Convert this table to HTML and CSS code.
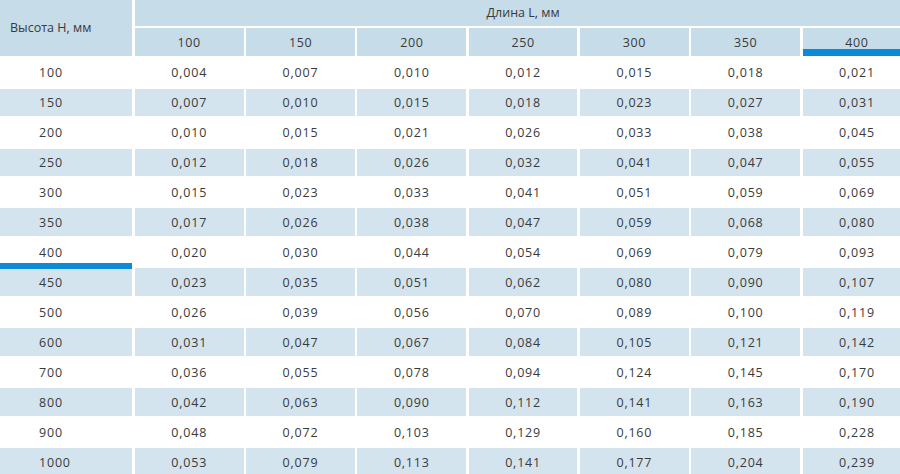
FILE: index.html
```html
<!DOCTYPE html>
<html lang="ru">
<head>
<meta charset="utf-8">
<title>Таблица</title>
<link rel="stylesheet" href="styles.css">
</head>
<body>
<div class="grid">
  <div class="hcell corner">Высота Н, мм</div>
  <div class="hcell span">Длина L, мм</div>
  <div class="hcell">100</div>
  <div class="hcell">150</div>
  <div class="hcell">200</div>
  <div class="hcell">250</div>
  <div class="hcell">300</div>
  <div class="hcell">350</div>
  <div class="hcell mark">400</div>

  <div class="row"><div class="c first">100</div><div class="c">0,004</div><div class="c">0,007</div><div class="c">0,010</div><div class="c">0,012</div><div class="c">0,015</div><div class="c">0,018</div><div class="c">0,021</div></div>
  <div class="row alt"><div class="c first">150</div><div class="c">0,007</div><div class="c">0,010</div><div class="c">0,015</div><div class="c">0,018</div><div class="c">0,023</div><div class="c">0,027</div><div class="c">0,031</div></div>
  <div class="row"><div class="c first">200</div><div class="c">0,010</div><div class="c">0,015</div><div class="c">0,021</div><div class="c">0,026</div><div class="c">0,033</div><div class="c">0,038</div><div class="c">0,045</div></div>
  <div class="row alt"><div class="c first">250</div><div class="c">0,012</div><div class="c">0,018</div><div class="c">0,026</div><div class="c">0,032</div><div class="c">0,041</div><div class="c">0,047</div><div class="c">0,055</div></div>
  <div class="row"><div class="c first">300</div><div class="c">0,015</div><div class="c">0,023</div><div class="c">0,033</div><div class="c">0,041</div><div class="c">0,051</div><div class="c">0,059</div><div class="c">0,069</div></div>
  <div class="row alt"><div class="c first">350</div><div class="c">0,017</div><div class="c">0,026</div><div class="c">0,038</div><div class="c">0,047</div><div class="c">0,059</div><div class="c">0,068</div><div class="c">0,080</div></div>
  <div class="row"><div class="c first mark-row">400</div><div class="c">0,020</div><div class="c">0,030</div><div class="c">0,044</div><div class="c">0,054</div><div class="c">0,069</div><div class="c">0,079</div><div class="c">0,093</div></div>
  <div class="row alt"><div class="c first">450</div><div class="c">0,023</div><div class="c">0,035</div><div class="c">0,051</div><div class="c">0,062</div><div class="c">0,080</div><div class="c">0,090</div><div class="c">0,107</div></div>
  <div class="row"><div class="c first">500</div><div class="c">0,026</div><div class="c">0,039</div><div class="c">0,056</div><div class="c">0,070</div><div class="c">0,089</div><div class="c">0,100</div><div class="c">0,119</div></div>
  <div class="row alt"><div class="c first">600</div><div class="c">0,031</div><div class="c">0,047</div><div class="c">0,067</div><div class="c">0,084</div><div class="c">0,105</div><div class="c">0,121</div><div class="c">0,142</div></div>
  <div class="row"><div class="c first">700</div><div class="c">0,036</div><div class="c">0,055</div><div class="c">0,078</div><div class="c">0,094</div><div class="c">0,124</div><div class="c">0,145</div><div class="c">0,170</div></div>
  <div class="row alt"><div class="c first">800</div><div class="c">0,042</div><div class="c">0,063</div><div class="c">0,090</div><div class="c">0,112</div><div class="c">0,141</div><div class="c">0,163</div><div class="c">0,190</div></div>
  <div class="row"><div class="c first">900</div><div class="c">0,048</div><div class="c">0,072</div><div class="c">0,103</div><div class="c">0,129</div><div class="c">0,160</div><div class="c">0,185</div><div class="c">0,228</div></div>
  <div class="row alt"><div class="c first">1000</div><div class="c">0,053</div><div class="c">0,079</div><div class="c">0,113</div><div class="c">0,141</div><div class="c">0,177</div><div class="c">0,204</div><div class="c">0,239</div></div>
</div>
</body>
</html>
```

FILE: styles.css
```css
html, body {
  margin: 0;
  padding: 0;
  background: #ffffff;
  overflow: hidden;
}

body {
  font-family: "Open Sans", "Noto Sans", sans-serif;
  font-size: 12.5px;
  color: #3a3a3a;
}

.grid {
  display: grid;
  grid-template-columns: 132.3px repeat(7, 108.7px);
  grid-template-rows: 25.7px 27.7px repeat(14, 27.4px);
  gap: 2.6px;
  width: 910.8px;
}

.row {
  display: contents;
}

.hcell {
  background: #c6dce9;
  display: flex;
  align-items: center;
  justify-content: center;
  letter-spacing: 0.6px;
}

.corner {
  grid-row: 1 / span 2;
  justify-content: flex-start;
  padding-left: 10px;
  letter-spacing: 0;
}

.span {
  grid-column: 2 / span 7;
  letter-spacing: 0;
}

.mark {
  box-shadow: inset 0 -7px 0 #0a8bd8;
}

.c {
  display: flex;
  align-items: center;
  justify-content: center;
  background: #ffffff;
  letter-spacing: 0.8px;
}

.alt .c {
  background: #d3e4ef;
}

.first {
  justify-content: flex-start;
  padding-left: 39px;
}

.mark-row {
  position: relative;
}

.mark-row::after {
  content: "";
  position: absolute;
  left: 0;
  right: 0;
  bottom: -3px;
  height: 6px;
  background: #0a8bd8;
}
```
